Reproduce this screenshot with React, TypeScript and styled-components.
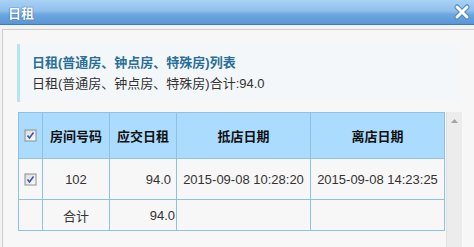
import React from "react";
import styled, { createGlobalStyle } from "styled-components";

const Global = createGlobalStyle`
  html, body { margin: 0; padding: 0; background: #f3f3f3; }
  body { font-family: "Liberation Sans", "Noto Sans CJK SC", sans-serif; font-size: 13px; color: #333; }
  #root { width: 474px; height: 247px; overflow: hidden; }
`;

const Window = styled.div`
  width: 474px;
  height: 247px;
  display: flex;
  flex-direction: column;
  overflow: hidden;
`;

const TitleBar = styled.div`
  height: 25px;
  flex: none;
  display: flex;
  align-items: center;
  justify-content: space-between;
  padding: 0 4px 0 8px;
  box-sizing: border-box;
  background: linear-gradient(#a9d2f4 0%, #8fc0ec 45%, #6ea7e0 60%, #5a96d6 100%);
  border-bottom: 1px solid #3b78c0;
`;

const Title = styled.span`
  color: #fff;
  font-weight: bold;
  font-size: 13px;
  font-family: "Noto Sans CJK SC", sans-serif;
  text-shadow: 0 0 1px #2a5f9e, 0 0 1px #2a5f9e;
  letter-spacing: 0px;
`;

const Body = styled.div`
  flex: 1;
  display: flex;
  padding: 4px 0 0 2px;
  min-height: 0;
`;

const Panel = styled.div`
  flex: 1;
  display: flex;
  flex-direction: column;
  border-top: 1px solid #cdcdcd;
  border-left: 1px solid #cdcdcd;
  background: #f7f7f7;
  padding: 14px 0 0 14px;
  min-height: 0;
  margin-right: -10px;
`;

const InfoBox = styled.div`
  width: 443px;
  box-sizing: border-box;
  height: 58px;
  padding: 8px 0 0 12px;
  border-left: 3px solid #b6e4f4;
  background: #f3f7fa;
  flex: none;
`;

const InfoLine = styled.div<{ $strong?: boolean }>`
  line-height: 21px;
  height: 21px;
  font-size: 13px;
  white-space: nowrap;
  font-family: "Liberation Sans", "Noto Sans CJK SC", sans-serif;
  color: ${(p) => (p.$strong ? "#2a6f99" : "#333")};
  font-weight: ${(p) => (p.$strong ? "bold" : "normal")};
`;

const TableArea = styled.div`
  flex: 1;
  display: flex;
  align-items: stretch;
  margin-top: 10px;
  margin-left: 1px;
  min-height: 0;
`;

const TableWrap = styled.div`
  flex: none;
`;

const Grid = styled.table`
  border-collapse: collapse;
  table-layout: fixed;
  width: 426px;
  font-size: 13px;
`;

const HeadRow = styled.tr`
  height: 46px;
  background: #abdcfe;
`;

const Row = styled.tr<{ $h: number }>`
  height: ${(p) => p.$h}px;
`;

const HeadCell = styled.th`
  border: 1px solid #8ec1e7;
  padding: 0;
  font-weight: bold;
  color: #111;
  text-align: center;
  font-family: "Noto Sans CJK SC", sans-serif;
  font-size: 13px;
`;

const Cell = styled.td<{ $align?: "left" | "center" | "right"; $pr?: number }>`
  border: 1px solid #8ec1e7;
  padding: 0 ${(p) => p.$pr ?? 0}px 0 0;
  text-align: ${(p) => p.$align ?? "center"};
  color: #333;
  white-space: nowrap;
  font-family: "Liberation Sans", "Noto Sans CJK SC", sans-serif;
`;

const CheckCell = styled.td`
  border: 1px solid #8ec1e7;
  padding: 0;
  text-align: center;
  vertical-align: middle;
`;

const CheckHead = styled.th`
  border: 1px solid #8ec1e7;
  padding: 0;
  text-align: center;
  vertical-align: middle;
`;

const Scrollbar = styled.div`
  width: 16px;
  flex: none;
  margin-left: 1px;
  background: #ececec;
  border-left: 1px solid #e2e2e2;
  box-sizing: border-box;
  display: flex;
  justify-content: center;
  padding-top: 7px;
`;

const CloseIcon = () => (
  <svg width="16" height="16" viewBox="0 0 16 16">
    <path d="M3 3 L13 13 M13 3 L3 13" stroke="#4a86c8" strokeWidth="5" strokeLinecap="round" />
    <path d="M3 3 L13 13 M13 3 L3 13" stroke="#fff" strokeWidth="3" strokeLinecap="round" />
  </svg>
);

const CheckBox = () => (
  <svg width="13" height="13" viewBox="0 0 13 13" style={{ display: "block", margin: "0 auto" }}>
    <defs>
      <linearGradient id="cbg" x1="0" y1="0" x2="1" y2="1">
        <stop offset="0" stopColor="#dcdcdc" />
        <stop offset="1" stopColor="#fbfbfb" />
      </linearGradient>
    </defs>
    <rect x="0.5" y="0.5" width="12" height="12" fill="#8e8f8f" />
    <rect x="1.5" y="1.5" width="10" height="10" fill="url(#cbg)" />
    <path d="M3.5 6.5 L5.5 9 L9.5 3.5" stroke="#3a55b8" strokeWidth="1.6" fill="none" />
  </svg>
);

const UpArrow = () => (
  <svg width="7" height="4" viewBox="0 0 7 4">
    <path d="M0 4 L3.5 0 L7 4 Z" fill="#a3a3a3" />
  </svg>
);

export default function App() {
  return (
    <>
      <Global />
      <Window>
        <TitleBar>
          <Title>日租</Title>
          <CloseIcon />
        </TitleBar>
        <Body>
          <Panel>
            <InfoBox>
              <InfoLine $strong>日租(普通房、钟点房、特殊房)列表</InfoLine>
              <InfoLine>日租(普通房、钟点房、特殊房)合计:94.0</InfoLine>
            </InfoBox>
            <TableArea>
              <TableWrap>
                <Grid>
                  <colgroup>
                    <col style={{ width: 24 }} />
                    <col style={{ width: 67 }} />
                    <col style={{ width: 67 }} />
                    <col style={{ width: 134 }} />
                    <col style={{ width: 134 }} />
                  </colgroup>
                  <thead>
                    <HeadRow>
                      <CheckHead>
                        <CheckBox />
                      </CheckHead>
                      <HeadCell>房间号码</HeadCell>
                      <HeadCell>应交日租</HeadCell>
                      <HeadCell>抵店日期</HeadCell>
                      <HeadCell>离店日期</HeadCell>
                    </HeadRow>
                  </thead>
                  <tbody>
                    <Row $h={41}>
                      <CheckCell>
                        <CheckBox />
                      </CheckCell>
                      <Cell>102</Cell>
                      <Cell $align="right" $pr={5}>94.0</Cell>
                      <Cell>2015-09-08 10:28:20</Cell>
                      <Cell>2015-09-08 14:23:25</Cell>
                    </Row>
                    <Row $h={31}>
                      <CheckCell />
                      <Cell>合计</Cell>
                      <Cell $align="right" $pr={1}>94.0</Cell>
                      <Cell />
                      <Cell />
                    </Row>
                  </tbody>
                </Grid>
              </TableWrap>
              <Scrollbar>
                <UpArrow />
              </Scrollbar>
            </TableArea>
          </Panel>
        </Body>
      </Window>
    </>
  );
}
